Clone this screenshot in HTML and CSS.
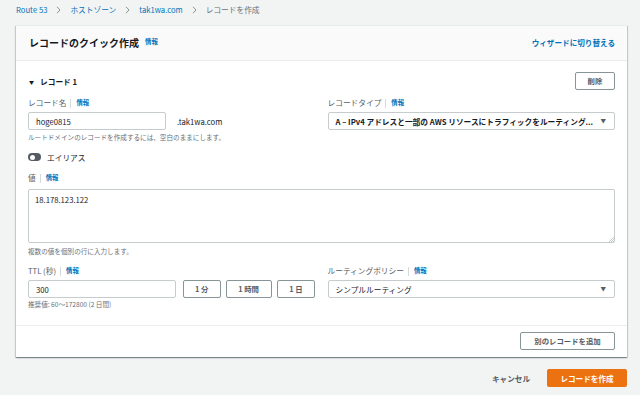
FILE: index.html
```html
<!DOCTYPE html>
<html lang="ja">
<head>
<meta charset="utf-8">
<title>レコードを作成</title>
<link rel="stylesheet" href="styles.css">
</head>
<body>
<nav class="crumbs">
  <a class="crumb-link">Route 53</a>
  <svg class="chev" viewBox="0 0 5 8" width="5" height="8"><path d="M1 0.8 L4 4 L1 7.2" fill="none" stroke="#879596" stroke-width="1"/></svg>
  <a class="crumb-link">ホストゾーン</a>
  <svg class="chev" viewBox="0 0 5 8" width="5" height="8"><path d="M1 0.8 L4 4 L1 7.2" fill="none" stroke="#879596" stroke-width="1"/></svg>
  <a class="crumb-link">tak1wa.com</a>
  <svg class="chev" viewBox="0 0 5 8" width="5" height="8"><path d="M1 0.8 L4 4 L1 7.2" fill="none" stroke="#879596" stroke-width="1"/></svg>
  <span class="crumb-current">レコードを作成</span>
</nav>

<section class="card">
  <header class="card-header">
    <h1 class="title">レコードのクイック作成 <span class="info">情報</span></h1>
    <a class="wizard">ウィザードに切り替える</a>
  </header>

  <div class="card-body">
    <div class="record-head">
      <div class="record-title"><span class="caret">▼</span>レコード 1</div>
      <button class="btn">削除</button>
    </div>

    <div class="grid row-gap">
      <div class="field">
        <div class="label">レコード名<span class="divider"></span><span class="info">情報</span></div>
        <div class="name-row">
          <div class="input name-input">hoge0815</div>
          <span class="suffix">.tak1wa.com</span>
        </div>
        <div class="help">ルートドメインのレコードを作成するには、空白のままにします。</div>
      </div>
      <div class="field">
        <div class="label">レコードタイプ<span class="divider"></span><span class="info">情報</span></div>
        <div class="select">
          <span class="select-text strong">A – IPv4 アドレスと一部の AWS リソースにトラフィックをルーティング...</span>
          <span class="select-caret">▼</span>
        </div>
      </div>
    </div>

    <div class="toggle-row">
      <span class="toggle"><span class="knob"></span></span>
      <span>エイリアス</span>
    </div>

    <div class="field value-field">
      <div class="label">値<span class="divider"></span><span class="info">情報</span></div>
      <div class="textarea">18.178.123.122
        <svg class="grip" viewBox="0 0 6 6" width="6" height="6"><path d="M1 6 L6 1 M3 6 L6 3 M5 6 L6 5" stroke="#aab7b8" stroke-width="0.7"/></svg>
      </div>
      <div class="help">複数の値を個別の行に入力します。</div>
    </div>

    <div class="grid ttl-grid">
      <div class="field">
        <div class="label">TTL (秒)<span class="divider"></span><span class="info">情報</span></div>
        <div class="ttl-row">
          <div class="input ttl-input">300</div>
          <button class="btn ttl-btn w1">1 分</button>
          <button class="btn ttl-btn w2">1 時間</button>
          <button class="btn ttl-btn w3">1 日</button>
        </div>
        <div class="help help-tight">推奨値: 60～172800 (2 日間)</div>
      </div>
      <div class="field">
        <div class="label">ルーティングポリシー<span class="divider"></span><span class="info">情報</span></div>
        <div class="select select-short">
          <span class="select-text">シンプルルーティング</span>
          <span class="select-caret">▼</span>
        </div>
      </div>
    </div>
  </div>

  <footer class="card-footer">
    <button class="btn add-btn">別のレコードを追加</button>
  </footer>
</section>

<div class="actions">
  <a class="cancel">キャンセル</a>
  <button class="primary">レコードを作成</button>
</div>
</body>
</html>
```

FILE: styles.css
```css
* { box-sizing: border-box; }

html, body {
  margin: 0;
  padding: 0;
}

body {
  background: #f2f3f3;
  font-family: "Noto Sans CJK JP", "Noto Sans", sans-serif;
  font-size: 7.7px;
  color: #16191f;
  padding: 0 13px 0 16px;
  width: 640px;
  height: 395px;
  overflow: hidden;
}

/* breadcrumbs */
.crumbs {
  height: 20px;
  margin-bottom: 5px;
  display: flex;
  align-items: center;
  gap: 7px;
  font-size: 7.7px;
  line-height: 1;
}
.crumb-link { color: #0073bb; }
.crumb-current { color: #687078; }
.chev { display: block; margin: 0 2px; }

/* card */
.card {
  background: #fff;
  box-shadow: 0 1px 1px rgba(0, 28, 36, 0.3), 1px 1px 1px rgba(0, 28, 36, 0.15), -1px 1px 1px rgba(0, 28, 36, 0.15);
  border-top: 1px solid #eaeded;
}
.card-header {
  height: 35px;
  background: #fafafa;
  border-bottom: 1px solid #eaeded;
  display: flex;
  align-items: center;
  justify-content: space-between;
  padding: 0 12px 1px 13px;
}
.title {
  margin: 0;
  font-size: 10px;
  font-weight: 700;
  line-height: 1;
  display: flex;
  align-items: center;
  gap: 6px;
}
.wizard {
  color: #0073bb;
  font-weight: 700;
  font-size: 7.6px;
}
.info {
  color: #0073bb;
  font-weight: 700;
  font-size: 6.4px;
}

.card-body {
  padding: 11px 12px 17px;
}

.record-head {
  height: 18px;
  display: flex;
  align-items: center;
  justify-content: space-between;
}
.record-title {
  font-weight: 700;
  font-size: 7.7px;
  padding-left: 1px;
  display: flex;
  align-items: center;
}
.caret {
  font-size: 5px;
  margin-right: 6px;
  color: #16191f;
}

.btn {
  font-family: inherit;
  font-size: 7.4px;
  font-weight: 700;
  color: #545b64;
  background: #fff;
  border: 1px solid #879596;
  border-radius: 2px;
  height: 18px;
  padding: 0 9px;
  line-height: 1;
  display: inline-flex;
  align-items: center;
  justify-content: center;
}
.record-head .btn { width: 40px; margin-right: 0; }

.grid {
  display: grid;
  grid-template-columns: minmax(0, 1fr) minmax(0, 1fr);
  column-gap: 12px;
}
.field { min-width: 0; }
.row-gap { margin-top: 8px; }

.label {
  height: 10px;
  margin-bottom: 4px;
  display: flex;
  align-items: center;
  color: #545b64;
  font-size: 7.7px;
  line-height: 1;
}
.divider {
  width: 1px;
  height: 9px;
  background: #d5dbdb;
  margin: 0 5px 0 4px;
}

.input, .select, .textarea {
  border: 1px solid #c6cccd;
  border-radius: 2px;
  background: #fff;
  font-size: 7.7px;
  color: #16191f;
}
.input {
  height: 18px;
  display: flex;
  align-items: center;
  padding: 0 7px;
}
.name-row {
  display: flex;
  align-items: center;
}
.name-input { width: 138px; }
.suffix { margin-left: 11px; }

.help {
  margin-top: 3px;
  height: 8px;
  line-height: 8px;
  font-size: 6.6px;
  color: #687078;
  white-space: nowrap;
}

.select {
  height: 18px;
  display: flex;
  align-items: center;
  justify-content: space-between;
  padding: 0 7px 0 7px;
}
.select-text {
  white-space: nowrap;
}
.strong { font-weight: 700; color: #16191f; }
.select-caret {
  font-size: 5.5px;
  color: #545b64;
  margin-right: 1px;
  flex: none;
}

.toggle-row {
  margin-top: 11px;
  height: 10px;
  display: flex;
  align-items: center;
  gap: 6px;
  font-size: 7.7px;
}
.toggle {
  width: 13px;
  height: 8px;
  border-radius: 4px;
  background: #545b64;
  display: flex;
  align-items: center;
  padding-left: 1.5px;
}
.knob {
  width: 5px;
  height: 5px;
  border-radius: 50%;
  background: #fff;
}

.value-field { margin-top: 11px; }
.value-field .label { margin-bottom: 6px; }
.textarea {
  position: relative;
  height: 54px;
  padding: 4px 6px;
  line-height: 11px;
}
.grip {
  position: absolute;
  right: 0;
  bottom: 0;
}
.value-field .help { margin-top: 4px; }

.ttl-grid { margin-top: 11px; }
.ttl-row {
  display: flex;
  align-items: center;
}
.ttl-input { width: 148px; }
.ttl-btn { margin-left: 5px; padding: 0; }
.w1 { width: 38px; margin-left: 7px; }
.w2 { width: 46px; }
.w3 { width: 39px; }
.help-tight { margin-top: 2px; }

.card-footer {
  border-top: 1px solid #eaeded;
  padding: 6px 12px 7px;
  display: flex;
  justify-content: flex-end;
}
.add-btn { width: 95px; padding: 0; }

.actions {
  margin-top: 12px;
  display: flex;
  justify-content: flex-end;
  align-items: center;
  gap: 17px;
}
.cancel {
  font-weight: 700;
  color: #545b64;
  font-size: 7.6px;
}
.primary {
  font-family: inherit;
  width: 80px;
  height: 18px;
  border: none;
  border-radius: 2px;
  background: #ec7211;
  color: #fff;
  font-weight: 700;
  font-size: 7.6px;
  display: inline-flex;
  align-items: center;
  justify-content: center;
}
```
